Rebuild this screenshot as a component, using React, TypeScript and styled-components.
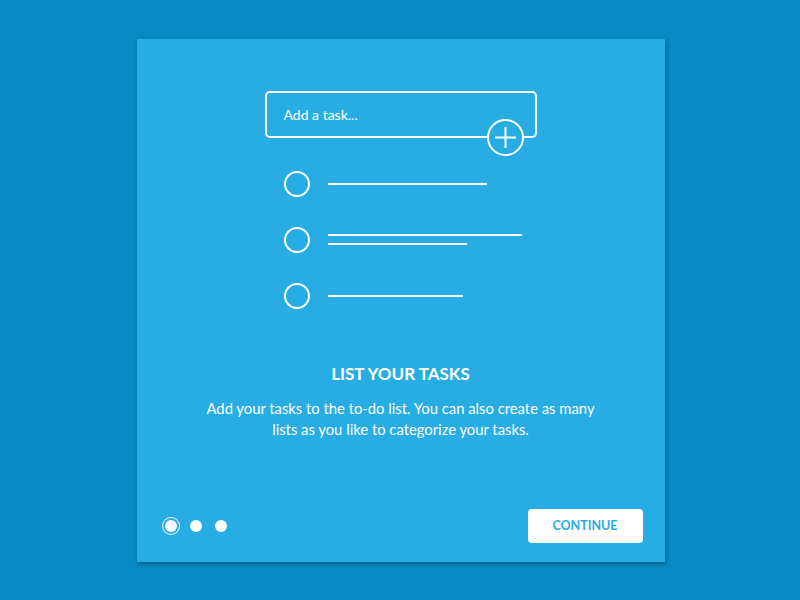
import React from 'react';
import styled, { createGlobalStyle } from 'styled-components';

const GlobalStyle = createGlobalStyle`
  html, body {
    margin: 0;
    padding: 0;
    height: 100%;
  }
  body {
    background-color: #0789c3;
    font-family: Lato, "Open Sans", "Liberation Sans", sans-serif;
  }
  #root {
    height: 100%;
  }
`;

const Page = styled.div`
  align-items: center;
  display: flex;
  height: 100vh;
  justify-content: center;
  width: 100vw;
`;

const Card = styled.div`
  background-color: #27ade3;
  box-shadow: 1px 2px 4px rgba(0, 0, 0, 0.3);
  display: flex;
  flex-direction: column;
  height: 523px;
  margin-left: 1px;
  width: 528px;
  color: #fff;
`;

const Illustration = styled.div`
  align-self: center;
  display: flex;
  flex-direction: column;
  margin-top: 52px;
  width: 272px;
`;

const TaskInput = styled.div`
  align-items: center;
  border: 2px solid #fff;
  border-radius: 5px;
  box-sizing: border-box;
  display: flex;
  font-size: 14px;
  height: 47px;
  padding-left: 17px;
  position: relative;
`;

const AddButton = styled.div`
  align-items: center;
  background-color: #27ade3;
  border: 2px solid #fff;
  border-radius: 50%;
  box-sizing: border-box;
  display: flex;
  height: 37px;
  justify-content: center;
  position: absolute;
  right: 11px;
  top: 26px;
  width: 37px;
`;

const TaskList = styled.div`
  display: flex;
  flex-direction: column;
  gap: 30px;
  margin-top: 33px;
  padding-left: 19px;
`;

const TaskRow = styled.div`
  align-items: center;
  display: flex;
  gap: 18px;
`;

const Check = styled.div`
  border: 2px solid #fff;
  border-radius: 50%;
  box-sizing: border-box;
  flex: none;
  height: 26px;
  width: 26px;
`;

const Lines = styled.div`
  display: flex;
  flex-direction: column;
  gap: 7px;
`;

const Line = styled.div<{ $width: number }>`
  background-color: #fff;
  height: 2px;
  width: ${(p) => p.$width}px;
`;

const Title = styled.h1`
  font-size: 17px;
  font-weight: 700;
  line-height: 20px;
  margin: 55px 0 0;
  text-align: center;
`;

const Description = styled.p`
  align-self: center;
  font-size: 14.8px;
  line-height: 21px;
  margin: 14px 0 0;
  max-width: 395px;
  text-align: center;
`;

const Footer = styled.div`
  align-items: center;
  display: flex;
  justify-content: space-between;
  margin-top: auto;
  padding: 0 22px 19px 24px;
`;

const Dots = styled.div`
  align-items: center;
  display: flex;
  gap: 13px;
`;

const Dot = styled.div<{ $active?: boolean }>`
  background-color: #fff;
  border-radius: 50%;
  height: 12px;
  width: 12px;
  ${(p) =>
    p.$active &&
    `
    box-shadow: 0 0 0 2px #27ade3, 0 0 0 3px #fff;
    margin-left: 4px;
  `}
`;

const ContinueButton = styled.button`
  background-color: #fff;
  border: none;
  border-radius: 4px;
  color: #27ade3;
  font-family: inherit;
  font-size: 12.5px;
  font-weight: 700;
  height: 34px;
  width: 115px;
`;

const tasks = [[159], [194, 139], [135]];

export default function App() {
  return (
    <>
      <GlobalStyle />
      <Page>
        <Card>
          <Illustration>
            <TaskInput>
              Add a task...
              <AddButton>
                <svg width="23" height="23" viewBox="0 0 23 23">
                  <path d="M11.5 1v21M1 11.5h21" stroke="#fff" strokeWidth="2" />
                </svg>
              </AddButton>
            </TaskInput>
            <TaskList>
              {tasks.map((widths, i) => (
                <TaskRow key={i}>
                  <Check />
                  <Lines>
                    {widths.map((w, j) => (
                      <Line key={j} $width={w} />
                    ))}
                  </Lines>
                </TaskRow>
              ))}
            </TaskList>
          </Illustration>
          <Title>LIST YOUR TASKS</Title>
          <Description>
            Add your tasks to the to-do list. You can also create as many lists as you like to
            categorize your tasks.
          </Description>
          <Footer>
            <Dots>
              <Dot $active />
              <Dot />
              <Dot />
            </Dots>
            <ContinueButton>CONTINUE</ContinueButton>
          </Footer>
        </Card>
      </Page>
    </>
  );
}
